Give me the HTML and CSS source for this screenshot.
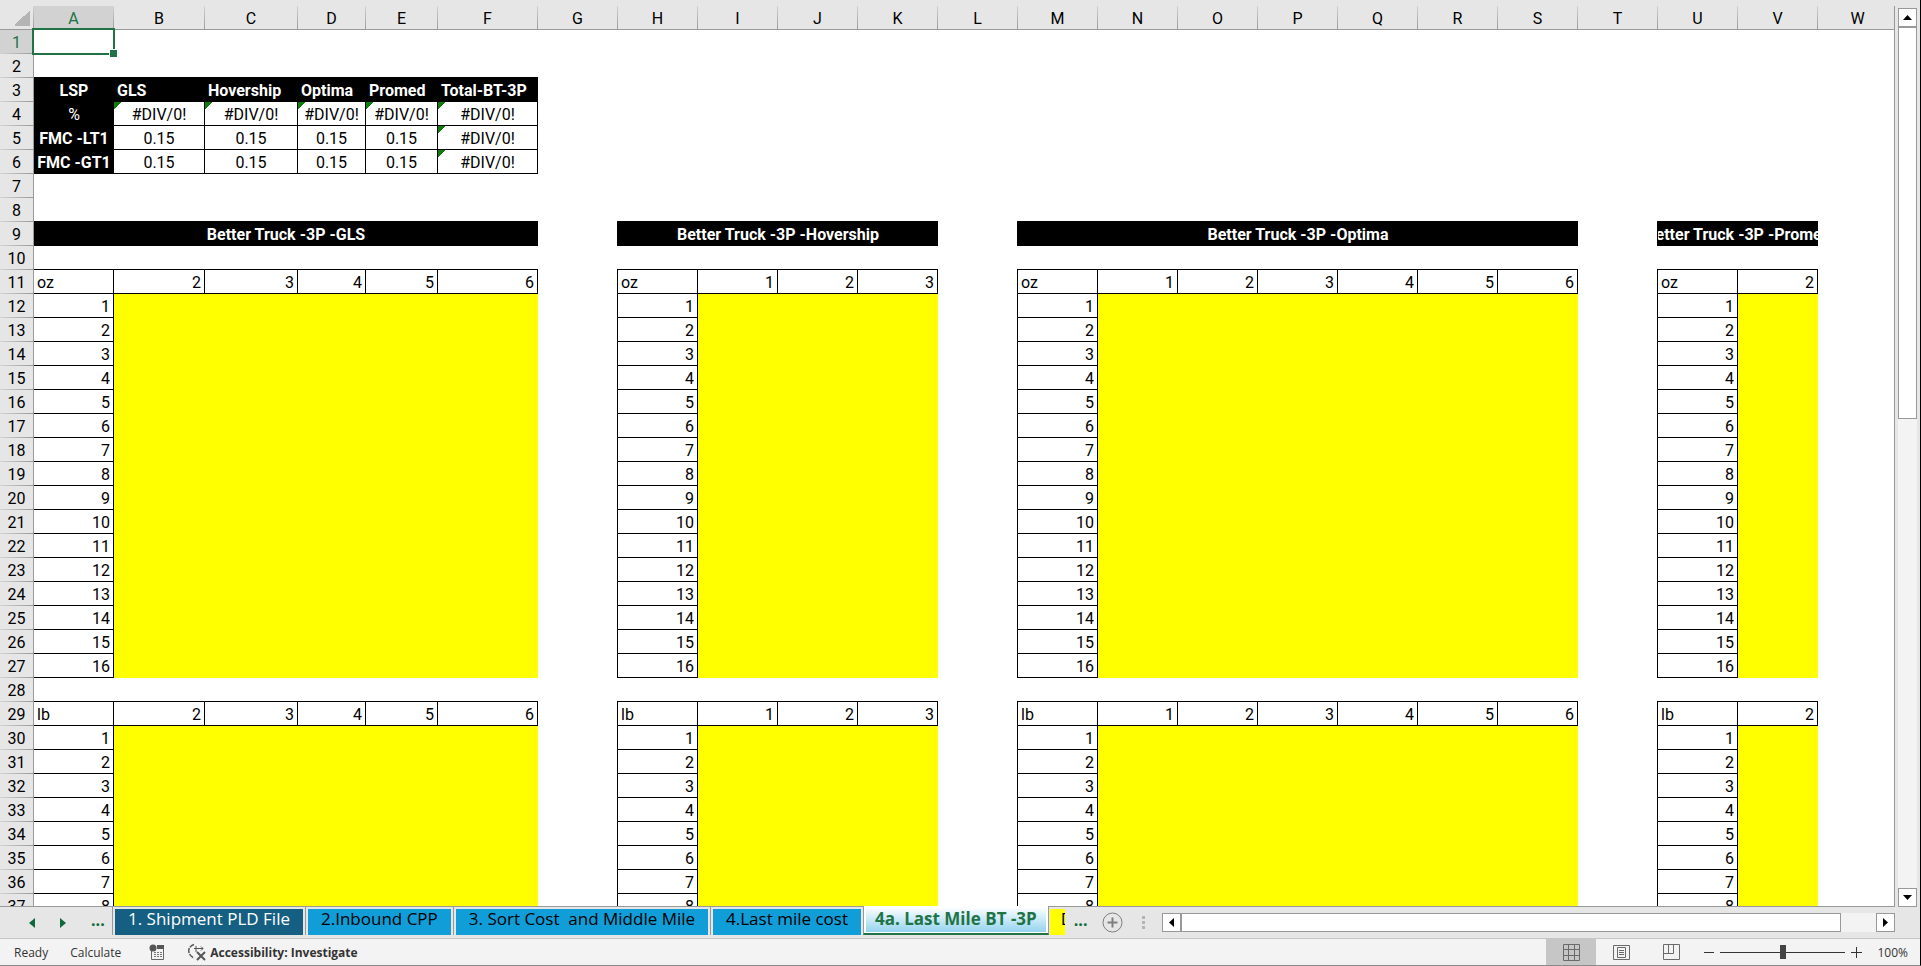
FILE: index.html
```
<!DOCTYPE html>
<html lang="en">
<head>
  <meta charset="UTF-8" />
  <meta name="viewport" content="width=device-width, initial-scale=1.0"/>
  <title>4a. Last Mile BT -3P</title>
  <link rel="stylesheet" href="styles.css">
</head>
<body>

<main class="workspace">
  <div class="sheet">
    <table class="grid">
      <colgroup id="cols"></colgroup>
      <thead id="head"></thead>
      <tbody id="rows"></tbody>
    </table>
  </div>
  <div class="vscroll">
    <button class="scroll-btn" aria-label="Scroll up"><svg width="9" height="5" viewBox="0 0 9 5"><path d="M0 5L4.500 0L9 5z"/></svg></button>
    <div class="vtrack"><div class="vthumb"></div></div>
    <button class="scroll-btn" aria-label="Scroll down"><svg width="9" height="5" viewBox="0 0 9 5"><path d="M0 0L4.500 5L9 0z"/></svg></button>
  </div>
</main>

<nav class="tabbar">
  <div class="tab-nav">
    <button class="nav-btn" aria-label="Previous sheet"><svg width="6" height="10" viewBox="0 0 6 10"><path d="M6 0L0 5L6 10z"/></svg></button>
    <button class="nav-btn" aria-label="Next sheet"><svg width="6" height="10" viewBox="0 0 6 10"><path d="M0 0L6 5L0 10z"/></svg></button>
    <button class="nav-btn dots" aria-label="More sheets">...</button>
  </div>
  <ul class="tabs">
    <li><button class="tab dark">1. Shipment PLD File</button></li>
    <li><button class="tab">2.Inbound CPP</button></li>
    <li><button class="tab">3. Sort Cost&nbsp; and Middle Mile</button></li>
    <li><button class="tab">4.Last mile cost</button></li>
    <li class="active"><button class="tab">4a. Last Mile BT -3P</button></li>
    <li class="cut"><button class="tab">D</button></li>
  </ul>
  <button class="nav-btn dots more" aria-label="More sheets">...</button>
  <button class="nav-btn" aria-label="New sheet">
    <svg class="add" width="21" height="21" viewBox="0 0 21 21"><circle cx="10.500" cy="10.500" r="9.500"/><path d="M10.500 5.500v10M5.500 10.500h10" stroke-width="2"/></svg>
  </button>
  <div class="grip"><i></i><i></i><i></i></div>
  <div class="hscroll">
    <button class="scroll-btn" aria-label="Scroll left"><svg width="5" height="9" viewBox="0 0 5 9"><path d="M5 0L0 4.500L5 9z"/></svg></button>
    <div class="htrack"><div class="hthumb"></div></div>
    <button class="scroll-btn" aria-label="Scroll right"><svg width="5" height="9" viewBox="0 0 5 9"><path d="M0 0L5 4.500L0 9z"/></svg></button>
  </div>
</nav>

<footer class="status">
  <span class="ready">Ready</span>
  <span class="calc">Calculate</span>
  <button class="icon-btn macro" aria-label="Record macro">
    <svg width="16" height="16" viewBox="0 0 16 16"><path d="M2.500 6v9.500h12V4" fill="none" stroke="#666"/><path d="M8 1h7v4H8z" fill="#555"/><circle cx="4" cy="4" r="3.500" fill="#555"/><path d="M5 8.500h8M5 10.500h8M5 12.500h8" stroke="#777" stroke-dasharray="2 1"/></svg>
  </button>
  <button class="access">
    <svg width="19" height="18" viewBox="0 0 19 18" fill="none" stroke="#555"><path d="M6 1.500C2 3 0 6 1 9.500S4 14 6 15" stroke-width="1.500" stroke-dasharray="5 1"/><path d="M6 5.500h9M13 3.500l2 2l-2 2M8 3v6" /><path d="M9 9l8 8M17 9l-8 8" stroke-width="2"/></svg>
    Accessibility: Investigate
  </button>
  <div class="views">
    <button class="view on" aria-label="Normal"><svg width="17" height="17" viewBox="0 0 17 17"><path d="M.5.5h16v16H.5zM5.500.5v16M11.500.5v16M.5 5.500h16M.5 11.500h16"/></svg></button>
    <button class="view" aria-label="Page layout"><svg width="17" height="15" viewBox="0 0 17 15"><path d="M.5.5h16v14H.5zM4.500 2.500h8v10h-8zM6 5.500h5M6 7.500h5M6 9.500h5"/></svg></button>
    <button class="view" aria-label="Page break preview"><svg width="17" height="16" viewBox="0 0 17 16"><path d="M.5.5h16v15H.5zM.5 9.500h10V.5M5.500.5v9"/></svg></button>
  </div>
  <button class="zoom-btn" aria-label="Zoom out"><svg width="10" height="11" viewBox="0 0 10 11"><path d="M0 5.500h10"/></svg></button>
  <input class="zoom" type="range" min="0" max="100" value="50" aria-label="Zoom">
  <button class="zoom-btn" aria-label="Zoom in"><svg width="11" height="11" viewBox="0 0 11 11"><path d="M0 5.500h11M5.500 0v11"/></svg></button>
  <span class="percent">100%</span>
</footer>

<script>
  const widths = { A: 80, B: 91, C: 93, D: 68, E: 72, F: 100 };
  const letters = "ABCDEFGHIJKLMNOPQRSTUVW".split("");
  const rowCount = 37;

  // weight / zone blocks: first column, then one column for each zone
  const blocks = [
    { title: "Better Truck -3P -GLS", start: 0, end: 5, zones: [2, 3, 4, 5, 6] },
    { title: "Better Truck -3P -Hovership", start: 7, end: 10, zones: [1, 2, 3] },
    { title: "Better Truck -3P -Optima", start: 12, end: 18, zones: [1, 2, 3, 4, 5, 6] },
    { title: "Better Truck -3P -Promed", start: 20, end: 21, zones: [2] }
  ];

  const summary = {
    3: ["LSP", "GLS", "Hovership", "Optima", "Promed", "Total-BT-3P"],
    4: ["%", "#DIV/0!", "#DIV/0!", "#DIV/0!", "#DIV/0!", "#DIV/0!"],
    5: ["FMC -LT1", "0.15", "0.15", "0.15", "0.15", "#DIV/0!"],
    6: ["FMC -GT1", "0.15", "0.15", "0.15", "0.15", "#DIV/0!"]
  };

  // what one cell holds: { text, cls, boxed, span }
  function getCell(row, col) {
    if (summary[row] && col < 6) {
      const text = summary[row][col];
      let cls = "center";
      if (row === 3 || col === 0) cls = "black center";
      if (row === 3 && col > 0) cls = "black left";
      if (text === "#DIV/0!") cls += " error";
      if (text === "%") cls += " plain";
      return { text, cls, boxed: true };
    }
    const block = blocks.find(b => col >= b.start && col <= b.end);
    if (!block) return null;
    if (row === 9) {
      return { text: block.title, cls: "black title", boxed: true, span: block.end - block.start + 1 };
    }
    if (row === 11 || row === 29) {
      if (col === block.start) return { text: row === 11 ? "oz" : "lb", cls: "left", boxed: true };
      return { text: block.zones[col - block.start - 1], cls: "right", boxed: true };
    }
    if ((row > 11 && row < 28) || row > 29) {
      if (col === block.start) return { text: row < 28 ? row - 11 : row - 29, cls: "right", boxed: true };
      return { text: "", cls: "yellow" };
    }
    return null;
  }

  function isBoxed(row, col) {
    const cell = getCell(row, col);
    return cell && cell.boxed;
  }

  let cols = '<col class="col-num">';
  let head = '<tr><th class="corner"></th>';
  letters.forEach(letter => {
    cols += `<col style="width:${widths[letter] || 80}px">`;
    head += `<th class="${letter === "A" ? "selected" : ""}">${letter}</th>`;
  });
  document.getElementById("cols").innerHTML = cols;
  document.getElementById("head").innerHTML = head + "</tr>";

  let html = "";
  for (let row = 1; row <= rowCount; row++) {
    html += `<tr><th class="${row === 1 ? "selected" : ""}">${row}</th>`;
    for (let col = 0; col < letters.length; col++) {
      const cell = getCell(row, col) || { text: "", cls: "" };
      const span = cell.span || 1;
      let cls = cell.cls;
      const right = cell.boxed || isBoxed(row, col + span);
      const bottom = cell.boxed || isBoxed(row + 1, col);
      if (right && bottom) cls += " line-rb";
      else if (right) cls += " line-r";
      else if (bottom) cls += " line-b";
      else if (isBoxed(row + 1, col + 1)) cls += " line-corner";
      if (row === 1 && col === 0) cls += " cursor";
      html += `<td class="${cls}" colspan="${span}"><div>${cell.text}</div></td>`;
      col += span - 1;
    }
    html += "</tr>";
  }
  document.getElementById("rows").innerHTML = html;
</script>

</body>
</html>
```
FILE: styles.css
```
* {
  box-sizing: border-box;
}

body {
  margin: 0;
  height: 100vh;
  overflow: hidden;
  display: flex;
  flex-direction: column;
  background: #e6e6e6;
  border-right: 1px solid #000;
  border-bottom: 1px solid #8a8a8a;
  color: #000;
  font-family: "Open Sans", "Noto Sans", sans-serif;
}

button {
  margin: 0;
  padding: 0;
  border: none;
  background: none;
  font: inherit;
  color: inherit;
  display: flex;
  align-items: center;
  justify-content: center;
}

/* sheet */
.workspace {
  flex: 1;
  min-height: 0;
  display: flex;
  gap: 3px;
  padding: 6px 3px 0 0;
}

.sheet {
  flex: 1;
  min-width: 0;
  overflow: hidden;
  border-right: 1px solid #999;
  border-bottom: 1px solid #999;
  background: #fff;
}

.grid {
  table-layout: fixed;
  width: 1898px;
  border-collapse: separate;
  border-spacing: 0;
  font-family: Roboto, "Liberation Sans", sans-serif;
  font-size: 16px;
  line-height: 21px;
}

.col-num {
  width: 34px;
}

.grid th,
.grid td {
  height: 24px;
  padding: 0;
  font-weight: normal;
  white-space: nowrap;
}

.grid th {
  padding-top: 2px;
  border: solid #999;
  border-width: 0 1px 1px 0;
  background: #e6e6e6;
  text-align: center;
}

.grid thead th {
  border-image: linear-gradient(#d4d4d4, #999) 1;
}

.grid tbody th {
  border-image: linear-gradient(to right, #d4d4d4, #999) 1;
}

.grid th.selected {
  background: #d2d2d2;
  color: #217346;
}

.grid .corner {
  background: linear-gradient(135deg, transparent 50%, #b4b4b4 50%) 14px 4px / 16px 16px no-repeat #e6e6e6;
}

.grid td div {
  height: 24px;
  overflow: hidden;
  padding: 2px 4px 0 3px;
}

.line-r { box-shadow: inset -1px 0 #000; }
.line-b { box-shadow: inset 0 -1px #000; }
.line-rb { box-shadow: inset -1px -1px #000; }
.line-corner { background: linear-gradient(#000, #000) right bottom / 1px 1px no-repeat; }

.center { text-align: center; }
.left { text-align: left; }
.right { text-align: right; }
.yellow { background: #ff0; }

.grid td.black {
  background: #000;
  color: #fff;
  font-weight: bold;
}

.grid td.plain {
  font-weight: normal;
}

.grid td.black.center div {
  padding: 2px 0 0;
}

.grid td.title div {
  display: flex;
  justify-content: center;
  padding: 2px 0 0;
}

.error {
  background: linear-gradient(135deg, #0a7d0a 50%, transparent 50%) 0 0 / 8px 8px no-repeat;
}

/* selected cell outline lies over the neighbouring cells */
.cursor {
  position: relative;
}

.cursor::before {
  content: "";
  position: absolute;
  inset: -2px -1px -1px -2px;
  border: 2px solid #217346;
}

.cursor::after {
  content: "";
  position: absolute;
  right: -3px;
  bottom: -3px;
  width: 7px;
  height: 7px;
  border: 1px solid #fff;
  border-right: none;
  border-bottom: none;
  background: #217346;
}

/* scrollbars */
.scroll-btn {
  width: 19px;
  height: 19px;
  flex: none;
  background: #fff;
  border: 1px solid #999;
}

.vscroll {
  width: 19px;
  margin-top: 2px;
  display: flex;
  flex-direction: column;
}

.vtrack {
  flex: 1;
  background: #f3f3f3;
}

.vthumb {
  height: 45.5%;
  background: #fff;
  border: 1px solid #999;
}

.hscroll {
  flex: 1;
  display: flex;
  height: 19px;
}

.htrack {
  flex: 1;
  background: #f3f3f3;
}

.hthumb {
  width: 95%;
  height: 19px;
  background: #fff;
  border: 1px solid #999;
}

/* sheet tabs */
.tabbar {
  height: 32px;
  flex: none;
  display: flex;
  align-items: center;
  padding-right: 25px;
  border-bottom: 1px solid #c6c6c6;
}

.tab-nav {
  width: 112px;
  display: flex;
  align-items: center;
  gap: 25px;
  padding-left: 29px;
}

.nav-btn {
  fill: #0e6b39;
  color: #0e6b39;
}

.dots {
  padding-bottom: 6px;
  font-size: 16px;
  font-weight: bold;
}

.tabs {
  height: 31px;
  margin: 0;
  padding: 0;
  list-style: none;
  display: flex;
  align-items: flex-start;
}

.tabs li {
  padding: 2px 2px 0;
  border-left: 1px solid #999;
}

.tab {
  height: 26px;
  padding: 0 13px 6px;
  background: #119dd7;
  font-size: 17px;
  line-height: 20px;
  white-space: pre;
}

.tab.dark {
  background: #156082;
  color: #fff;
}

/* covers the sheet's bottom line so the tab joins the sheet */
.tabs .active {
  margin-top: -1px;
  padding: 1px 2px;
  border-right: 1px solid #999;
  border-bottom: 2px solid #217346;
  background: #fff;
}

.active .tab {
  height: 25px;
  padding: 0 9px 1px;
  background: linear-gradient(#fff, #94d3ef);
  color: #217346;
  font-weight: bold;
}

.tabs .cut {
  width: 16px;
  padding-left: 1px;
  padding-right: 0;
  border-left: none;
  overflow: hidden;
}

.cut .tab {
  padding-left: 11px;
  background: #ff0;
}

.more {
  margin: 0 15px 0 9px;
}

.add {
  fill: none;
  stroke: #7f7f7f;
}

.grip {
  display: flex;
  flex-direction: column;
  gap: 2px;
  margin: 0 17px 0 19px;
}

.grip i {
  width: 3px;
  height: 3px;
  background: #b4b4b4;
}

/* status bar */
.status {
  height: 26px;
  flex: none;
  display: flex;
  align-items: center;
  padding: 0 12px 0 14px;
  background: #f3f3f3;
  color: #333;
  font-size: 12px;
}

.calc { margin-left: 22px; }
.macro { margin-left: 28px; }

.access {
  margin-left: 23px;
  gap: 3px;
  font-weight: bold;
}

.views {
  margin-left: auto;
  display: flex;
  align-self: stretch;
}

.view {
  width: 50px;
  fill: none;
  stroke: #6a6a6a;
}

.view.on {
  background: #c6c6c6;
}

.zoom-btn {
  stroke: #333;
}

.views + .zoom-btn {
  margin-left: 8px;
}

.zoom {
  width: 125px;
  height: 14px;
  margin: 0 6px;
  appearance: none;
  background: linear-gradient(#333, #333) center / 100% 1px no-repeat;
}

.zoom::-webkit-slider-thumb {
  appearance: none;
  width: 6px;
  height: 14px;
  background: #444;
}

.percent {
  margin-left: 15px;
}
```
